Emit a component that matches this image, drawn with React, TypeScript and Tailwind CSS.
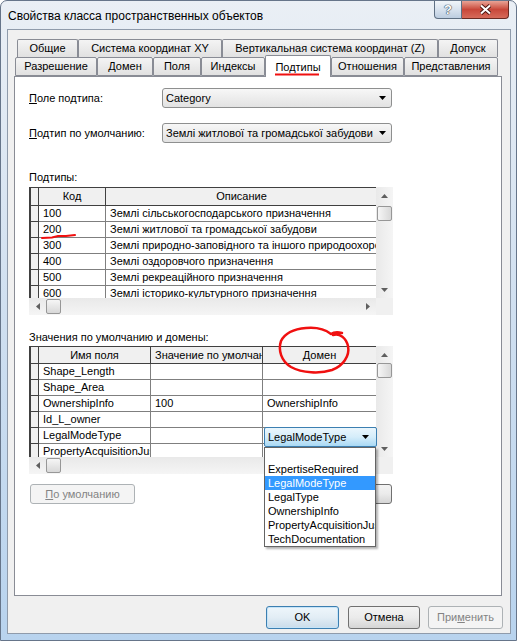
import React from "react";

const Tri = ({ c = "#000" }: { c?: string }) => (
  <svg width="7" height="4" viewBox="0 0 7 4">
    <path d="M0 0H7L3.5 4Z" fill={c} />
  </svg>
);
const TriUp = () => (
  <svg width="7" height="4" viewBox="0 0 7 4">
    <path d="M0 4H7L3.5 0Z" fill="#5f5f5f" />
  </svg>
);
const TriDown = () => (
  <svg width="7" height="4" viewBox="0 0 7 4">
    <path d="M0 0H7L3.5 4Z" fill="#5f5f5f" />
  </svg>
);
const TriLeft = () => (
  <svg width="4" height="7" viewBox="0 0 4 7">
    <path d="M4 0V7L0 3.5Z" fill="#5f5f5f" />
  </svg>
);
const TriRight = () => (
  <svg width="4" height="7" viewBox="0 0 4 7">
    <path d="M0 0V7L4 3.5Z" fill="#5f5f5f" />
  </svg>
);

function Combo({ text }: { text: string }) {
  return (
    <div className="h-[20px] w-[230px] rounded-[3px] border border-[#8e8f8f] bg-linear-to-b from-[#f7f7f7] to-[#e2e2e2] flex items-center pl-[3px] pr-[5px] text-[11px]">
      <span className="flex-1 whitespace-nowrap overflow-hidden">{text}</span>
      <Tri />
    </div>
  );
}

function Thumb({ dir }: { dir: "v" | "h" }) {
  return (
    <div
      className={
        dir === "v"
          ? "mx-[1px] w-[15px] h-[15px] rounded-[2px] border border-[#979797] bg-linear-to-r from-[#f6f6f6] to-[#d8d8d8]"
          : "my-[1px] w-[15px] h-[15px] rounded-[2px] border border-[#979797] bg-linear-to-b from-[#f6f6f6] to-[#d8d8d8]"
      }
    />
  );
}

function VScroll({ gap }: { gap: "a" | "b" }) {
  return (
    <div className="w-[17px] h-[111px] flex flex-col bg-linear-to-r from-[#e9e9e9] to-[#f5f5f5]">
      <div className="h-[17px] flex items-center justify-center">
        <TriUp />
      </div>
      <div className={gap === "a" ? "mt-[2px]" : "mt-0"}>
        <Thumb dir="v" />
      </div>
      <div className="flex-1" />
      <div className="h-[17px] flex items-center justify-center">
        <TriDown />
      </div>
    </div>
  );
}

function HScroll() {
  return (
    <div className="h-[17px] w-[347px] flex bg-linear-to-b from-[#e9e9e9] to-[#f5f5f5]">
      <div className="w-[17px] flex items-center justify-center">
        <TriLeft />
      </div>
      <Thumb dir="h" />
      <div className="flex-1" />
      <div className="w-[17px] flex items-center justify-center">
        <TriRight />
      </div>
    </div>
  );
}

type Col = { w: string; label: string; left?: boolean };

function Grid({
  cols,
  rows,
  header,
  gap,
  children,
}: {
  cols: Col[];
  rows: string[][];
  header: string;
  gap: "a" | "b";
  children?: React.ReactNode;
}) {
  return (
    <div className="relative flex w-[364px] h-[128px]">
      <div className="flex flex-col w-[347px]">
        <div className="h-[111px] w-[347px] overflow-hidden bg-white border-t border-l-2 border-[#404040]">
          <div className={"flex " + header}>
            <div className="shrink-0 w-[8px] bg-[#f0f0f0] border-r border-b border-[#404040]" />
            {cols.map((c, i) => (
              <div
                key={i}
                className={
                  "shrink-0 bg-[#f0f0f0] border-r border-b border-[#404040] flex items-center overflow-hidden whitespace-nowrap text-[11px] " +
                  c.w +
                  (c.left ? " justify-start pl-[4px]" : " justify-center")
                }
              >
                {c.label}
              </div>
            ))}
          </div>
          {rows.map((r, ri) => (
            <div key={ri} className="flex h-[16px]">
              <div className="shrink-0 w-[8px] bg-[#f0f0f0] border-r border-b border-[#404040]" />
              {cols.map((c, i) => (
                <div
                  key={i}
                  className={
                    "shrink-0 bg-white border-r border-b border-[#7f7f7f] pl-[4px] overflow-hidden whitespace-nowrap text-[11px] leading-[15px] " +
                    c.w
                  }
                >
                  {r[i]}
                </div>
              ))}
            </div>
          ))}
        </div>
        <HScroll />
      </div>
      <div className="flex flex-col w-[17px]">
        <VScroll gap={gap} />
        <div className="h-[17px] bg-[#f0f0f0]" />
      </div>
      {children}
    </div>
  );
}

function Btn({
  children,
  w,
  kind = "normal",
}: {
  children?: React.ReactNode;
  w: string;
  kind?: "normal" | "default" | "disabled";
}) {
  const base = "h-full flex items-center justify-center rounded-[3px] border text-[11px] ";
  const k =
    kind === "disabled"
      ? "border-[#adb2b5] bg-[#f4f4f4] text-[#838383]"
      : kind === "default"
      ? "border-[#3c7fb1] bg-linear-to-b from-[#eef6fb] via-[#e2edf5] to-[#cadcea] shadow-[inset_0_0_0_1px_#c6e4f8]"
      : "border-[#707070] bg-linear-to-b from-[#f3f3f3] via-[#ebebeb] to-[#d5d5d5]";
  return <div className={base + k + " " + w}>{children}</div>;
}

const row1: [string, string][] = [
  ["Общие", "w-[61px]"],
  ["Система координат XY", "w-[144px]"],
  ["Вертикальная система координат (Z)", "w-[216px]"],
  ["Допуск", "w-[60px]"],
];
const row2: [string, string, boolean][] = [
  ["Разрешение", "w-[82px]", false],
  ["Домен", "w-[56px]", false],
  ["Поля", "w-[48px]", false],
  ["Индексы", "w-[64px]", false],
  ["Подтипы", "w-[66px]", true],
  ["Отношения", "w-[73px]", false],
  ["Представления", "w-[94px]", false],
];

const tabCls =
  "shrink-0 flex items-center justify-center border border-[#898c95] rounded-t-[2px] bg-linear-to-b from-[#f4f4f4] to-[#e1e1e1] text-[11px] whitespace-nowrap";

export default function App() {
  const subRows = [
    ["100", "Землі сільськогосподарського призначення"],
    ["200", "Землі житлової та громадської забудови"],
    ["300", "Землі природно-заповідного та іншого природоохоронного"],
    ["400", "Землі оздоровчого призначення"],
    ["500", "Землі рекреаційного призначення"],
    ["600", "Землі історико-культурного призначення"],
  ];
  const domRows = [
    ["Shape_Length", "", ""],
    ["Shape_Area", "", ""],
    ["OwnershipInfo", "100", "OwnershipInfo"],
    ["Id_L_owner", "", ""],
    ["LegalModeType", "", ""],
    ["PropertyAcquisitionJustification", "", ""],
  ];
  const items = [
    "",
    "ExpertiseRequired",
    "LegalModeType",
    "LegalType",
    "OwnershipInfo",
    "PropertyAcquisitionJustification",
    "TechDocumentation",
  ];

  return (
    <div className="relative w-[517px] h-[641px] overflow-hidden flex flex-col rounded-t-[7px] border border-[#66758a] bg-linear-to-b from-[#eaeff5] via-[#cfdff0] to-[#b8d3ee] font-['Liberation_Sans',Arial,sans-serif] text-black">
      {/* title bar */}
      <div className="h-[28px] shrink-0 flex justify-between">
        <span className="pl-[7px] pt-[7px] text-[12px] leading-[16px] whitespace-nowrap">
          Свойства класса пространственных объектов
        </span>
        <div className="flex pr-[7px]">
          <div className="w-[28px] h-[18px] rounded-bl-[4px] border border-t-0 border-[#5e6f83] bg-linear-to-b from-[#f1f5f9] via-[#d8e2ee] to-[#bccde0] flex items-center justify-center">
            <span className="text-[13px] font-bold leading-none text-white [text-shadow:0_0_1px_#34465a,0_0_1px_#34465a,0_0_1px_#34465a]">
              ?
            </span>
          </div>
          <div className="w-[47px] h-[18px] rounded-br-[4px] border border-t-0 border-l-0 border-[#6b2a22] bg-linear-to-b from-[#e8a396] via-[#c8473a] to-[#d66a5a] flex items-center justify-center">
            <svg width="13" height="11" viewBox="0 0 13 11">
              <path d="M2 1.5L11 9.5M11 1.5L2 9.5" stroke="#4a1510" strokeWidth="3.8" />
              <path d="M2 1.5L11 9.5M11 1.5L2 9.5" stroke="#ffffff" strokeWidth="2" />
            </svg>
          </div>
        </div>
      </div>

      {/* client area */}
      <div className="ml-[6px] w-[504px] h-[605px] shrink-0 border border-[#8f9bab] bg-[#f0f0f0] flex flex-col">
        <div className="pt-[9px]">
          <div className="flex h-[18px] ml-[9px]">
            {row1.map(([t, w]) => (
              <div key={t} className={tabCls + " border-b-0 h-[18px] " + w}>
                {t}
              </div>
            ))}
          </div>
          <div className="relative z-10 flex items-end h-[20px] -mb-px ml-[7px]">
            {row2.map(([t, w, act]) => (
              <div
                key={t}
                className={
                  act
                    ? "shrink-0 flex items-start justify-center pt-[3px] h-[22px] border border-b-0 border-[#898c95] rounded-t-[2px] bg-white text-[11px] whitespace-nowrap " +
                      w
                    : tabCls + " h-[19px] mb-px " + w
                }
              >
                {t}
              </div>
            ))}
          </div>
        </div>

        {/* tab panel */}
        <div className="ml-[6px] w-[488px] h-[520px] shrink-0 border border-[#898c95] bg-white flex flex-col pl-[14px] text-[11px]">
          <div className="mt-[11px] h-[20px] flex items-center">
            <span className="w-[133px]">
              <u>П</u>оле подтипа:
            </span>
            <Combo text="Category" />
          </div>
          <div className="mt-[15px] h-[20px] flex items-center">
            <span className="w-[133px]">
              <u>П</u>одтип по умолчанию:
            </span>
            <Combo text="Землі житлової та громадської забудови" />
          </div>

          <div className="mt-[27px] h-[14px] leading-[14px] mb-[3px]">Подтипы:</div>
          <Grid
            header="h-[18px]"
            gap="a"
            cols={[
              { w: "w-[67px]", label: "Код" },
              { w: "w-[272px]", label: "Описание" },
            ]}
            rows={subRows}
          />

          <div className="mt-[15px] h-[14px] leading-[14px] mb-[2px]">Значения по умолчанию и домены:</div>
          <Grid
            header="h-[17px]"
            gap="b"
            cols={[
              { w: "w-[112px]", label: "Имя поля" },
              { w: "w-[112px]", label: "Значение по умолчанию", left: true },
              { w: "w-[114px]", label: "Домен" },
            ]}
            rows={domRows}
          >
            <div className="absolute z-20 left-[235px] top-[81px] w-[113px] h-[20px] rounded-[2px] border border-[#3c7fb1] bg-linear-to-b from-[#eaf6fd] via-[#d5edfa] to-[#a9d9f4] flex items-center pl-[3px] pr-[7px] text-[11px]">
              <span className="flex-1 whitespace-nowrap">LegalModeType</span>
              <Tri />
            </div>
            <div className="absolute z-30 left-[235px] top-[101px] w-[112px] h-[100px] border border-[#646464] bg-white shadow-[2px_2px_2px_rgba(0,0,0,0.3)] flex flex-col">
              {items.map((it, i) => (
                <div
                  key={i}
                  className={
                    "h-[14px] leading-[14px] pl-[3px] whitespace-nowrap overflow-hidden text-[11px] " +
                    (it === "LegalModeType" ? "bg-[#3399ff] text-white" : "")
                  }
                >
                  {it}
                </div>
              ))}
            </div>
          </Grid>

          <div className="mt-[10px] h-[20px] w-[363px] flex justify-between pl-[1px]">
            <Btn w="w-[105px]" kind="disabled">
              <span>
                <u>П</u>о умолчанию
              </span>
            </Btn>
            <Btn w="w-[112px]" />
          </div>
        </div>

        {/* bottom buttons */}
        <div className="mt-[10px] h-[23px] flex justify-end pr-[7px]">
          <div className="mr-[9px] h-full">
            <Btn w="w-[73px]" kind="default">
              OK
            </Btn>
          </div>
          <div className="mr-[8px] h-full">
            <Btn w="w-[72px]">Отмена</Btn>
          </div>
          <div className="h-full">
            <Btn w="w-[75px]" kind="disabled">
              <span>
                При<u>м</u>енить
              </span>
            </Btn>
          </div>
        </div>
      </div>

      {/* red annotations */}
      <svg
        className="absolute left-[-1px] top-[-1px] pointer-events-none z-50"
        width="517"
        height="641"
        viewBox="0 0 517 641"
      >
        <path d="M275 74.5H319" stroke="#f01010" strokeWidth="2.2" fill="none" />
        <path
          d="M42 238L52 237.5L58 236L66 236L75 235"
          stroke="#f01010"
          strokeWidth="2"
          fill="none"
          strokeLinecap="round"
        />
        <path
          d="M333 335C340 333 346 338 348 346C350 356 343 366 332 370C320 374 302 373 291 367C281 361 278 350 281 341C285 333 294 329 306 328C317 327 326 330 331 334C334 332 338 332 342 333"
          stroke="#f01010"
          strokeWidth="2.5"
          fill="none"
          strokeLinecap="round"
          strokeLinejoin="round"
        />
      </svg>
    </div>
  );
}
